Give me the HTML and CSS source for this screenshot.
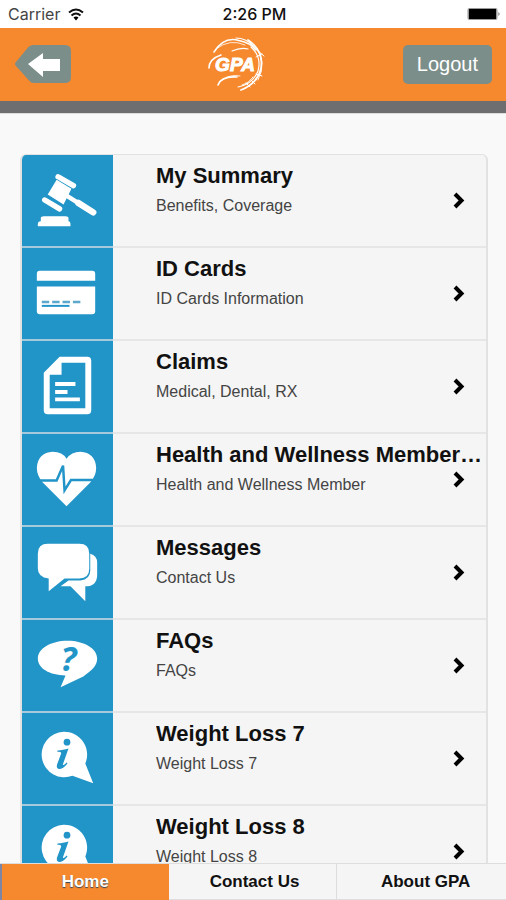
FILE: index.html
```html
<!DOCTYPE html>
<html lang="en">
<head>
<meta charset="utf-8">
<meta name="viewport" content="width=device-width, initial-scale=1">
<title>GPA Member Home</title>
<link rel="stylesheet" href="styles.css">
</head>
<body>
<svg class="defs" aria-hidden="true">
  <symbol id="chevron" viewBox="0 0 12 18"><path d="M2 2 8.500 8.500 2 15" fill="none" stroke="#000" stroke-width="4"/></symbol>
  <symbol id="info" viewBox="0 0 92 92">
    <path fill="#fff" d="M42 19a23 23 0 1 0 9 44.500L72 71 64 51A23 23 0 0 0 42 19z"/>
    <circle cx="45.500" cy="29.500" r="3.400" fill="#2194c8"/>
    <path fill="#2194c8" d="M36 38c4-.2 7-1 11-2l-5.500 15.500c-.5 1.700.8 1.500 3.500-1.500l1 1c-3 4-6 5.500-8.300 5.500-2.400 0-3.100-2-2.100-4.900l4-10.600c.4-1.300-1.200-1.600-4-1.700z"/>
  </symbol>
</svg>
<div class="status">
  <div class="carrier">Carrier
    <svg width="16" height="13" viewBox="0 0 16 13" aria-hidden="true"><g fill="none" stroke="#111" stroke-width="2"><path d="M1 4.500q7-6 14 0"/><path d="M3.500 7.500q4.500-4 9 0"/></g><path d="M5.500 9.500q2.500-2 5 0L8 12.500z"/></svg>
  </div>
  <div class="time">2:26 PM</div>
  <div class="battery"><svg width="34" height="14" viewBox="0 0 34 14" aria-hidden="true"><rect x=".5" y="1" width="30" height="12" rx="2" fill="#999"/><rect x="2" y="2" width="27" height="10"/><path d="M31.500 5q2 2 0 4z" fill="#555"/></svg></div>
</div>
<header class="header">
  <button class="back" aria-label="Back"><svg width="58" height="40" viewBox="0 0 58 40"><path fill="#7c8e8a" d="M19 0h32q6 0 6 6v26q0 6-6 6H20q-3 0-5-2.500L2 21q-2-2 0-4L14 2.500Q16 0 19 0z"/><path fill="#fff" d="M14 19 29 8v6h17v12H29v6z"/></svg></button>
  <svg class="logo" width="60" height="58" viewBox="0 0 60 58" role="img" aria-label="GPA">
    <g fill="none" stroke="#fff" stroke-linecap="round">
      <path d="M7 16Q17 0 32 4.500 44 7 49 14" stroke-width="1.600"/>
      <path d="M9 13Q23 2 38 9" stroke-width=".8"/>
      <path d="M29 2q10 0 17 8M25 15q9-4 16-2" stroke-width="1.200"/>
      <path d="M41 4Q57 15 54 32 51 47 34 54" stroke-width="1.800"/>
      <path d="M44 11Q55 21 51 35 46 48 31 51" stroke-width="1.200"/>
      <path d="M47 9Q61 26 51 44" stroke-width=".9"/>
      <path d="M51 15l6 5M49 21l6-3M49 38l6 2M44 44l4 4M39 47l4 4" stroke-width="1"/>
      <path d="M2 32q0-9 12-13" stroke-width="1.600"/>
      <path d="M11 49Q14 40 30 41" stroke-width="1.600"/>
      <path d="M15 44q8-6 18-4M35 49q7-2 11-8" stroke-width=".9"/>
    </g>
    <text x="28" y="35" text-anchor="middle" class="logo-text">GPA</text>
  </svg>
  <button class="logout">Logout</button>
</header>
<main class="main">
  <ul class="list">
    <li><a class="row" href="#summary">
      <svg class="tile" viewBox="0 0 92 92" aria-hidden="true"><g fill="#fff"><path d="M16 70q0-3 3-3v-3q0-2 3-2h22q3 0 3 2v3q2 0 2 3v2H16zM35 25 50 34 42 50 26 40z"/></g><g stroke="#fff" stroke-linecap="round"><path d="M36.500 22 52 31M23 45.500 38 54.500" stroke-width="5.500"/><path d="m45 41 27 17" stroke-width="4.500"/><path d="m57 48.500 15 9.500" stroke-width="6.500"/></g></svg>
      <div class="body"><h2>My Summary</h2><div class="line"><p>Benefits, Coverage</p><svg class="chev"><use href="#chevron"/></svg></div></div></a></li>
    <li><a class="row" href="#cards">
      <svg class="tile" viewBox="0 0 92 92" aria-hidden="true"><path fill="#fff" d="M15 33v-7q0-3 3-3h53q3 0 3 3v7zM15 39h59v25q0 3-3 3H18q-3 0-3-3z"/><path d="M20 54.500h39" stroke="#5ca9cd" stroke-width="2.500" stroke-dasharray="7.500 3"/><path d="M20 58.500h28" stroke="#2194c8" stroke-width="2"/></svg>
      <div class="body"><h2>ID Cards</h2><div class="line"><p>ID Cards Information</p><svg class="chev"><use href="#chevron"/></svg></div></div></a></li>
    <li><a class="row" href="#claims">
      <svg class="tile" viewBox="0 0 92 92" aria-hidden="true"><path fill="#fff" fill-rule="evenodd" d="M38 16h28q4 0 4 4v50q0 4-4 4H26q-4 0-4-4V32zM40 22v12H28v34h36V22z"/><path d="M33.500 43.500h20.500M33.500 51.500h12.500M33.500 59h25" stroke="#fff" stroke-width="4"/></svg>
      <div class="body"><h2>Claims</h2><div class="line"><p>Medical, Dental, RX</p><svg class="chev"><use href="#chevron"/></svg></div></div></a></li>
    <li><a class="row" href="#wellness">
      <svg class="tile" viewBox="0 0 92 92" aria-hidden="true"><path fill="#fff" d="M45 73 21 49Q15 42 15 34 16 19 31 18q10 0 14 7Q50 18 59 18q15 1 16 16 0 8-6 15z"/><path d="M17 47h18L41.500 32 43 57l6.500-10.500H73" fill="none" stroke="#2194c8" stroke-width="2.500"/></svg>
      <div class="body"><h2>Health and Wellness Member…</h2><div class="line"><p>Health and Wellness Member</p><svg class="chev"><use href="#chevron"/></svg></div></div></a></li>
    <li><a class="row" href="#messages">
      <svg class="tile" viewBox="0 0 92 92" aria-hidden="true"><g fill="#fff"><path d="M69 27q7 2 7 9v12q0 12-12 12v15L49 60H39l8-6h12q10-1 10-10z"/><path d="M26 17h32q10 0 10 10v15q0 10-10 10H43L27 65V52q-11-1-11-10V27q0-10 10-10z"/></g></svg>
      <div class="body"><h2>Messages</h2><div class="line"><p>Contact Us</p><svg class="chev"><use href="#chevron"/></svg></div></div></a></li>
    <li><a class="row" href="#faqs">
      <svg class="tile" viewBox="0 0 92 92" aria-hidden="true"><path fill="#fff" d="M46 21c17 0 30 8 30 18 0 8-6 12-14 18L39 68l5-12C28 56 16 49 16 39c0-10 13-18 30-18z"/><text x="47" y="52" text-anchor="middle" class="question">?</text></svg>
      <div class="body"><h2>FAQs</h2><div class="line"><p>FAQs</p><svg class="chev"><use href="#chevron"/></svg></div></div></a></li>
    <li><a class="row" href="#weight7">
      <svg class="tile" aria-hidden="true"><use href="#info"/></svg>
      <div class="body"><h2>Weight Loss 7</h2><div class="line"><p>Weight Loss 7</p><svg class="chev"><use href="#chevron"/></svg></div></div></a></li>
    <li><a class="row" href="#weight8">
      <svg class="tile" aria-hidden="true"><use href="#info"/></svg>
      <div class="body"><h2>Weight Loss 8</h2><div class="line"><p>Weight Loss 8</p><svg class="chev"><use href="#chevron"/></svg></div></div></a></li>
  </ul>
</main>
<nav class="tabs">
  <a class="active" href="#home">Home</a>
  <a href="#contact">Contact Us</a>
  <a href="#about">About GPA</a>
</nav>
</body>
</html>
```

FILE: styles.css
```css
* { box-sizing: border-box; }

body {
  margin: 0;
  height: 100vh;
  display: flex;
  flex-direction: column;
  background: #f9f9f9;
  color: #111;
  font-family: "Liberation Sans", Arial, sans-serif;
}

h2, p, ul { margin: 0; padding: 0; }
a { color: inherit; text-decoration: none; }
button { border: 0; padding: 0; font: inherit; cursor: pointer; }
svg { display: block; }
.defs { display: none; }

.status {
  flex: none;
  display: grid;
  grid-template-columns: 1fr auto 1fr;
  align-items: center;
  height: 28px;
  padding: 0 5px 0 8px;
  background: #fff;
  font: 16px/28px Inter, sans-serif;
}
.carrier { display: flex; align-items: center; gap: 8px; color: #444; }
.time { font-weight: 500; }
.battery { justify-self: end; }

.header {
  flex: none;
  display: flex;
  justify-content: space-between;
  align-items: center;
  height: 85px;
  padding: 0 14px;
  background: #f6882e;
  border-bottom: 12px solid #6e6e71;
}
.back { background: none; }
.logo-text {
  fill: #fff;
  stroke: #fff;
  stroke-width: 1px;
  font: italic bold 19px "Liberation Sans", sans-serif;
}
.logout {
  padding: 0 14px;
  height: 39px;
  border-radius: 5px;
  background: #7c8e8a;
  color: #fff;
  font-size: 20px;
}

.main {
  flex: 1;
  min-height: 0;
  overflow-y: auto;
  scrollbar-width: none;
  padding: 40px 18px 0 20px;
  border-top: 1px solid #ddd;
}
.list {
  list-style: none;
  overflow: hidden;
  background: #f5f5f5;
  border: 1px solid #e2e2e2;
  border-width: 1px 2px;
  border-radius: 6px;
}
.row { display: flex; height: 93px; border-bottom: 2px solid #e6e6e6; }
.tile {
  flex: none;
  width: 91px;
  height: 93px;
  background: #2194c8;
  border-bottom: 2px solid #a6c9dc;
}
.question { fill: #2194c8; font: italic bold 35px "Open Sans", sans-serif; }
.body { flex: 1; min-width: 0; padding: 8px 2px 0 43px; }
h2 {
  overflow: hidden;
  white-space: nowrap;
  text-overflow: ellipsis;
  font-size: 22px;
  line-height: 26px;
}
.line { display: flex; justify-content: space-between; padding: 3px 19px 0 0; }
.line p { padding-top: 5px; font-size: 16px; line-height: 18px; color: #444; }
.chev { width: 12px; height: 18px; }

.tabs {
  flex: none;
  display: grid;
  grid-template-columns: repeat(3, 1fr);
  height: 37px;
  background: #f5f5f5;
  border: 1px solid #ddd;
  border-width: 1px 0;
  font-size: 17px;
  font-weight: bold;
  line-height: 36px;
  text-align: center;
}
.tabs a + a { padding-left: 4px; border-right: 1px solid #ddd; }
.tabs a:last-child { padding-left: 8px; border-right: 0; }
.tabs .active {
  background: #f6882e;
  color: #fff;
  border-left: 2px solid #7d84a4;
  text-shadow: 0 1px 1px #345;
}
```
